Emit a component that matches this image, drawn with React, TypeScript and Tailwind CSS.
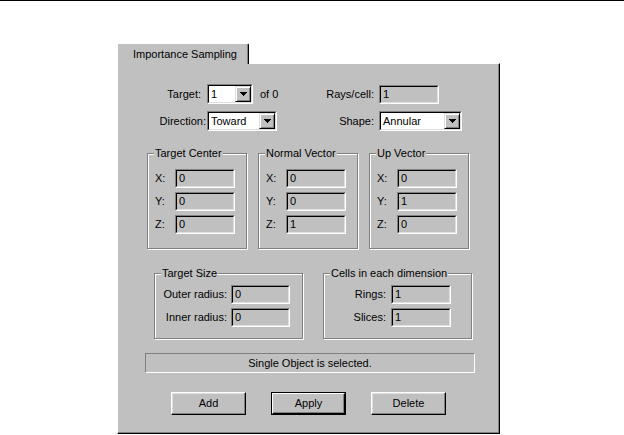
import React from "react";

function Arrow() {
  return (
    <svg width="7" height="4" viewBox="0 0 7 4">
      <path d="M0 0h7v1H0zM1 1h5v1H1zM2 2h3v1H2zM3 3h1v1H3z" fill="#000" />
    </svg>
  );
}

function Combo({ w, value }: { w: string; value: string }) {
  return (
    <div className={`${w} h-[20px] border border-t-[#808080] border-l-[#808080] border-r-white border-b-white`}>
      <div className="h-full flex items-center bg-white border border-t-black border-l-black border-r-[#dfdfdf] border-b-[#dfdfdf]">
        <span className="flex-1 pl-[2px] whitespace-nowrap overflow-hidden">{value}</span>
        <div className="w-[16px] h-full flex items-center justify-center bg-[#c0c0c0] border border-t-[#dfdfdf] border-l-[#dfdfdf] border-r-black border-b-black shadow-[inset_1px_1px_0_#fff,inset_-1px_-1px_0_#808080]">
          <Arrow />
        </div>
      </div>
    </div>
  );
}

function Edit({ w, value }: { w: string; value: string }) {
  return (
    <div className={`${w} h-[19px] border border-t-[#808080] border-l-[#808080] border-r-white border-b-white`}>
      <div className="h-full flex items-center bg-[#c0c0c0] border border-t-black border-l-black border-r-[#dfdfdf] border-b-[#dfdfdf]">
        <span className="pl-[2px]">{value}</span>
      </div>
    </div>
  );
}

function Group({
  title,
  className,
  children,
}: {
  title: string;
  className: string;
  children: React.ReactNode;
}) {
  return (
    <div className={`relative border border-[#808080] shadow-[1px_1px_0_#fff,inset_1px_1px_0_#fff] ${className}`}>
      <span className="absolute left-[6px] top-[-7px] bg-[#c0c0c0] px-[1px] leading-[13px]">{title}</span>
      {children}
    </div>
  );
}

function VecRows({ vals }: { vals: string[] }) {
  const labels = ["X:", "Y:", "Z:"];
  return (
    <div className="flex flex-col gap-[4px] pt-[15px]">
      {vals.map((v, i) => (
        <div key={i} className="flex items-center h-[19px]">
          <span className="w-[20px] ml-[7px]">{labels[i]}</span>
          <Edit w="w-[60px]" value={v} />
        </div>
      ))}
    </div>
  );
}

function Button({ label, def }: { label: string; def?: boolean }) {
  if (def) {
    return (
      <div className="w-[75px] h-[23px] border border-black">
        <div className="h-full flex items-center justify-center bg-[#c0c0c0] border border-t-white border-l-white border-r-black border-b-black shadow-[inset_-1px_-1px_0_#808080]">
          {label}
        </div>
      </div>
    );
  }
  return (
    <div className="w-[75px] h-[23px] flex items-center justify-center bg-[#c0c0c0] border border-t-white border-l-white border-r-black border-b-black shadow-[inset_-1px_-1px_0_#808080,inset_1px_1px_0_#dfdfdf]">
      {label}
    </div>
  );
}

export default function App() {
  return (
    <div className="w-[624px] h-[435px] bg-white overflow-hidden font-['Liberation_Sans',Arial,sans-serif] text-[11px] leading-[13px] text-black">
      <div className="h-[1px] bg-black" />
      <div className="ml-[117px] mt-[42px] w-[383px]">
        <div className="relative z-10 -mb-px w-[132px] h-[21px] bg-[#c0c0c0] border-l border-t border-r border-l-white border-t-white border-r-black shadow-[inset_-1px_0_0_#808080] rounded-tl-[2px] rounded-tr-[2px] pl-[15px] pt-[4px]">
          Importance Sampling
        </div>
        <div className="h-[371px] bg-[#c0c0c0] border border-l-white border-t-white border-r-black border-b-black shadow-[inset_-1px_-1px_0_#808080] flex flex-col">
          {/* Row 1 */}
          <div className="flex items-center mt-[20px] h-[20px]">
            <div className="w-[200px] flex items-center">
              <span className="w-[89px] text-right pr-[6px]">Target:</span>
              <Combo w="w-[46px]" value="1" />
              <span className="ml-[7px]">of 0</span>
            </div>
            <span className="w-[61px] text-right pr-[5px]">Rays/cell:</span>
            <Edit w="w-[60px]" value="1" />
          </div>
          {/* Row 2 */}
          <div className="flex items-center mt-[7px] h-[20px]">
            <div className="w-[200px] flex items-center">
              <span className="w-[89px] text-right pr-[1px]">Direction:</span>
              <Combo w="w-[70px]" value="Toward" />
            </div>
            <span className="w-[61px] text-right pr-[5px]">Shape:</span>
            <Combo w="w-[83px]" value="Annular" />
          </div>
          {/* Vector groups */}
          <div className="flex gap-[11px] ml-[29px] mt-[22px]">
            <Group title="Target Center" className="w-[100px] h-[96px]">
              <VecRows vals={["0", "0", "0"]} />
            </Group>
            <Group title="Normal Vector" className="w-[100px] h-[96px]">
              <VecRows vals={["0", "0", "1"]} />
            </Group>
            <Group title="Up Vector" className="w-[100px] h-[96px]">
              <VecRows vals={["0", "1", "0"]} />
            </Group>
          </div>
          {/* Size groups */}
          <div className="flex gap-[20px] ml-[36px] mt-[24px]">
            <Group title="Target Size" className="w-[149px] h-[66px]">
              <div className="flex flex-col gap-[4px] pt-[11px]">
                <div className="flex items-center h-[19px]">
                  <span className="w-[76px] text-right pr-[4px]">Outer radius:</span>
                  <Edit w="w-[59px]" value="0" />
                </div>
                <div className="flex items-center h-[19px]">
                  <span className="w-[76px] text-right pr-[4px]">Inner radius:</span>
                  <Edit w="w-[59px]" value="0" />
                </div>
              </div>
            </Group>
            <Group title="Cells in each dimension" className="w-[149px] h-[66px]">
              <div className="flex flex-col gap-[4px] pt-[11px]">
                <div className="flex items-center h-[19px]">
                  <span className="w-[67px] text-right pr-[5px]">Rings:</span>
                  <Edit w="w-[60px]" value="1" />
                </div>
                <div className="flex items-center h-[19px]">
                  <span className="w-[67px] text-right pr-[5px]">Slices:</span>
                  <Edit w="w-[60px]" value="1" />
                </div>
              </div>
            </Group>
          </div>
          {/* Status */}
          <div className="ml-[27px] mt-[14px] w-[330px] h-[20px] flex items-center justify-center border border-t-[#808080] border-l-[#808080] border-r-white border-b-white">
            Single Object is selected.
          </div>
          {/* Buttons */}
          <div className="flex gap-[25px] ml-[53px] mt-[19px]">
            <Button label="Add" />
            <Button label="Apply" def />
            <Button label="Delete" />
          </div>
        </div>
      </div>
    </div>
  );
}
